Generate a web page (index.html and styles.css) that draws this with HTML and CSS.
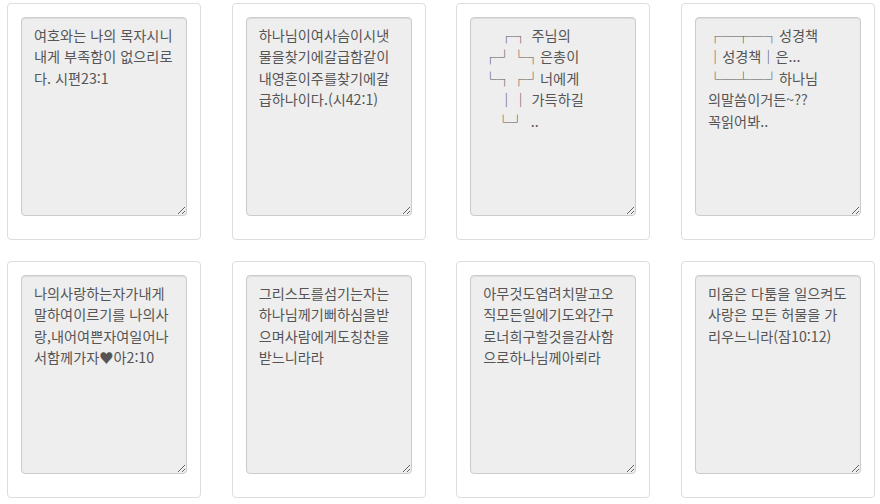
FILE: index.html
```html
<!DOCTYPE html>
<html lang="ko">
<head>
<meta charset="utf-8">
<title>말씀 카드</title>
<link rel="stylesheet" href="styles.css">
</head>
<body>
<div class="board">
  <div class="note"><textarea class="note-text" readonly>여호와는 나의 목자시니 내게 부족함이 없으리로다. 시편23:1</textarea></div>
  <div class="note"><textarea class="note-text" readonly>하나님이여사슴이시냇물을찾기에갈급함같이내영혼이주를찾기에갈급하나이다.(시42:1)</textarea></div>
  <div class="note"><textarea class="note-text" readonly>    ┌┐ 주님의
┌┘└┐은총이
└┐┌┘너에게
    ││ 가득하길
    └┘  ..</textarea></div>
  <div class="note"><textarea class="note-text" readonly>┌─┬─┐성경책
│성경책│은...
└─┴─┘하나님
의말씀이거든~??
꼭읽어봐..</textarea></div>
  <div class="note"><textarea class="note-text" readonly>나의사랑하는자가내게말하여이르기를 나의사랑,내어여쁜자여일어나서함께가자♥아2:10</textarea></div>
  <div class="note"><textarea class="note-text" readonly>그리스도를섬기는자는하나님께기뻐하심을받으며사람에게도칭찬을받느니라라</textarea></div>
  <div class="note"><textarea class="note-text" readonly>아무것도염려치말고오직모든일에기도와간구로너희구할것을감사함으로하나님께아뢰라</textarea></div>
  <div class="note"><textarea class="note-text" readonly>미움은 다툼을 일으켜도 사랑은 모든 허물을 가리우느니라(잠10:12)</textarea></div>
</div>
</body>
</html>
```
FILE: styles.css
```css
html, body {
  margin: 0;
  padding: 0;
  background: #fff;
}

.board {
  display: grid;
  grid-template-columns: repeat(4, 194px);
  grid-auto-rows: 237px;
  column-gap: 30.67px;
  row-gap: 21px;
  padding: 3px 0 0 7px;
}

.note {
  box-sizing: border-box;
  border: 1px solid #ddd;
  border-radius: 4px;
  padding: 13px 13px 0;
  background: #fff;
}

.note-text {
  display: block;
  box-sizing: border-box;
  width: 166px;
  height: 199px;
  margin: 0;
  padding: 7px 12px;
  border: 1px solid #ccc;
  border-radius: 4px;
  background: #eee;
  color: #555;
  font-family: "Noto Sans CJK KR", "Noto Sans", sans-serif;
  font-size: 14.2px;
  line-height: 21.4px;
  box-shadow: inset 0 1px 1px rgba(0, 0, 0, 0.075);
  outline: none;
}
```
